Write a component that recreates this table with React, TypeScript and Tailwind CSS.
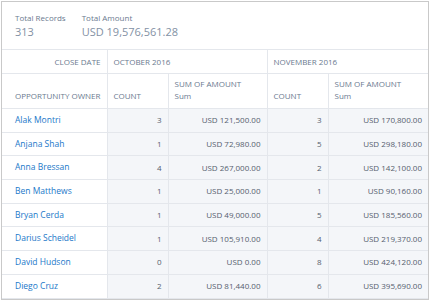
const rows = [
  { name: 'Alak Montri', oc: 3, os: 'USD 121,500.00', nc: 3, ns: 'USD 170,800.00' },
  { name: 'Anjana Shah', oc: 1, os: 'USD 72,980.00', nc: 5, ns: 'USD 298,180.00' },
  { name: 'Anna Bressan', oc: 4, os: 'USD 267,000.00', nc: 2, ns: 'USD 142,100.00' },
  { name: 'Ben Matthews', oc: 1, os: 'USD 25,000.00', nc: 1, ns: 'USD 90,160.00' },
  { name: 'Bryan Cerda', oc: 1, os: 'USD 49,000.00', nc: 5, ns: 'USD 185,560.00' },
  { name: 'Darius Scheidel', oc: 1, os: 'USD 105,910.00', nc: 4, ns: 'USD 219,370.00' },
  { name: 'David Hudson', oc: 0, os: 'USD 0.00', nc: 8, ns: 'USD 424,120.00' },
  { name: 'Diego Cruz', oc: 2, os: 'USD 81,440.00', nc: 6, ns: 'USD 395,690.00' },
]

export default function App() {
  return (
    <div className="w-[430px] h-[301px] bg-white overflow-hidden" style={{ fontFamily: '"Open Sans", sans-serif' }}>
      <div className="m-[1px] w-[428px] h-[299px] border border-[#c9c9c9] overflow-hidden">
        {/* summary */}
        <div className="h-[47px] flex gap-[16px] pl-[13px] pt-[10px] text-[#6b7a8f]">
          <div className="flex flex-col">
            <span className="text-[8px] leading-[12px]">Total Records</span>
            <span className="text-[11px] leading-[15px] text-[#8391a4]">313</span>
          </div>
          <div className="flex flex-col">
            <span className="text-[8px] leading-[12px]">Total Amount</span>
            <span className="text-[11px] leading-[15px] text-[#8391a4]">USD 19,576,561.28</span>
          </div>
        </div>

        <table className="border-collapse table-fixed w-[426px] text-[8px] text-[#54606e]">
          <colgroup>
            <col className="w-[105px]" />
            <col className="w-[61px]" />
            <col className="w-[99px]" />
            <col className="w-[61px]" />
            <col className="w-[100px]" />
          </colgroup>
          <thead className="text-[#6b7a8f]">
            <tr className="h-[24px] border-t border-b border-[#e4e7ec]">
              <th className="font-normal text-right pr-[6px] border-r border-[#e4e7ec]">CLOSE DATE</th>
              <th colSpan={2} className="font-normal text-left pl-[6px] border-r border-[#e4e7ec]">OCTOBER 2016</th>
              <th colSpan={2} className="font-normal text-left pl-[6px]">NOVEMBER 2016</th>
            </tr>
            <tr className="h-[35px] border-b border-[#e4e7ec]">
              <th className="font-normal text-right align-bottom pb-[6px] pr-[6px] border-r border-[#e4e7ec]">OPPORTUNITY OWNER</th>
              <th className="font-normal text-left align-bottom pb-[6px] pl-[6px] border-r border-[#e4e7ec]">COUNT</th>
              <th className="font-normal text-left align-bottom pb-[6px] pl-[6px] border-r border-[#e4e7ec] leading-[12px]">
                SUM OF AMOUNT
                <br />
                <span className="normal-case">Sum</span>
              </th>
              <th className="font-normal text-left align-bottom pb-[6px] pl-[6px] border-r border-[#e4e7ec]">COUNT</th>
              <th className="font-normal text-left align-bottom pb-[6px] pl-[6px] leading-[12px]">
                SUM OF AMOUNT
                <br />
                <span className="normal-case">Sum</span>
              </th>
            </tr>
          </thead>
          <tbody>
            {rows.map((r) => (
              <tr key={r.name} className="h-[23.7px] border-b border-[#e4e7ec]">
                <td className="pl-[13px] text-[8.5px] text-[#1b78c9] border-r border-[#e4e7ec]">{r.name}</td>
                <td className="bg-[#f4f6f9] text-right pr-[6px] border-r border-[#e4e7ec]">{r.oc}</td>
                <td className="bg-[#f4f6f9] text-right pr-[6px] border-r border-[#e4e7ec]">{r.os}</td>
                <td className="bg-[#f4f6f9] text-right pr-[6px] border-r border-[#e4e7ec]">{r.nc}</td>
                <td className="bg-[#f4f6f9] text-right pr-[6px]">{r.ns}</td>
              </tr>
            ))}
          </tbody>
        </table>
      </div>
    </div>
  )
}
